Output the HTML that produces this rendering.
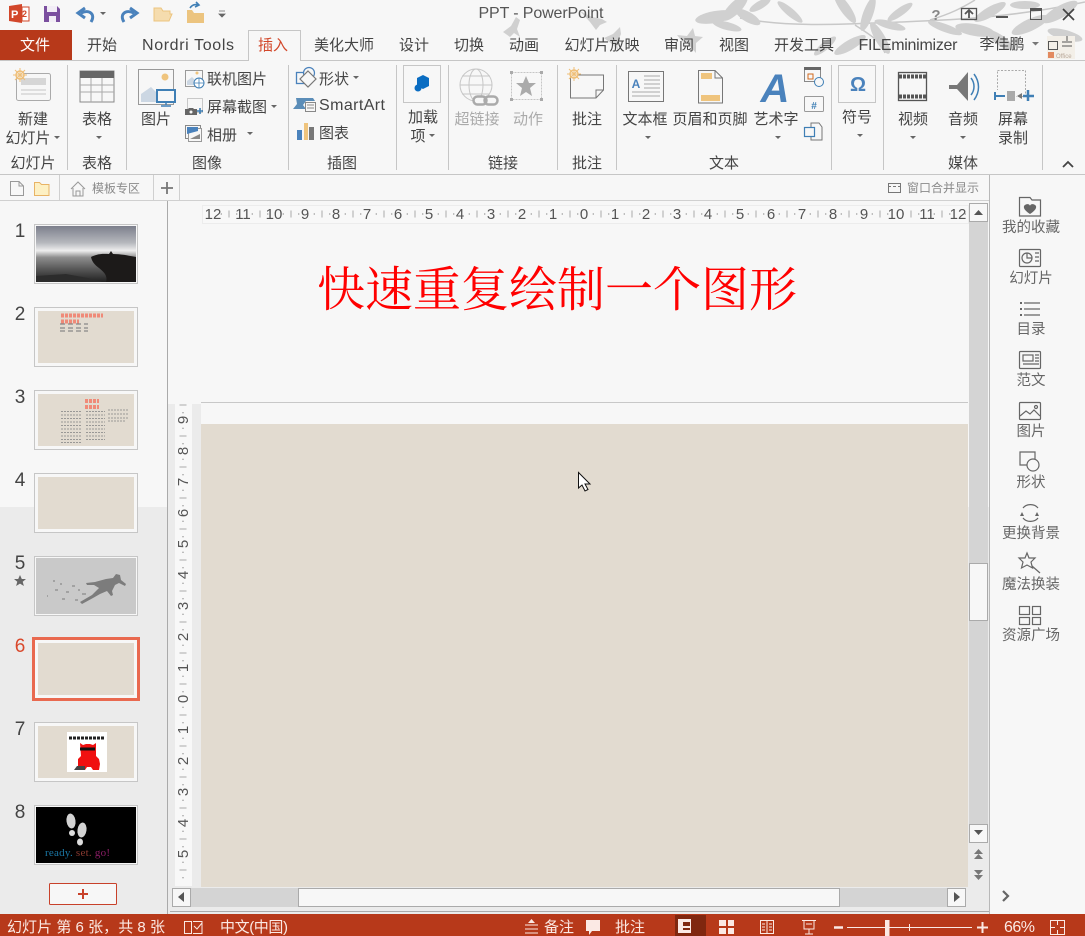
<!DOCTYPE html>
<html lang="zh"><head><meta charset="utf-8"><title>PPT - PowerPoint</title>
<style>
html,body{margin:0;padding:0;width:1085px;height:936px;overflow:hidden;background:#f7f7f7}
svg{display:block;font-family:"Liberation Sans","Noto Sans CJK SC",sans-serif}
.r text{font-size:15px;fill:#444;text-anchor:middle}
.s text{font-size:14.5px;fill:#666;text-anchor:middle}
.n text{font-size:19px;fill:#444;text-anchor:middle}
.rh text{font-size:15px;fill:#555;text-anchor:middle}
.st text{font-size:15px;fill:#fbe9e4}
.ic{fill:none;stroke:#666;stroke-width:1.2}
</style></head><body>
<svg width="1085" height="936" viewBox="0 0 1085 936" xmlns="http://www.w3.org/2000/svg">
<rect width="1085" height="936" fill="#f7f7f7"/>
<!-- decorative leaves -->
<g fill="#d0d0d0">
<path d="M503 32l8-6 5-9 4 3-3 9 3 8-6-4-4 4z"/>
<path d="M580 11l12 6 10 2 5 3-7 3-4 5-6-8z"/>
<path d="M604 38l9-4 7-7 1 7-4 9 1 7-6-6z"/>
<path d="M677 35l10 1 6-8 2 8 8 1-7 6 0 10-8-9-6-3z"/>
<g fill="none" stroke="#c8c8c8" stroke-width="1.5"><path d="M740 18C790 28 850 24 900 22S1010 18 1085 2"/><path d="M855 25c15 10 25 15 30 28M930 20c20-6 32-12 45-20"/></g>
<ellipse cx="715" cy="17" rx="20" ry="6" transform="rotate(-10 715 17)"/>
<ellipse cx="735" cy="8" rx="17" ry="6" transform="rotate(-45 735 8)"/>
<ellipse cx="748" cy="17" rx="14" ry="5" transform="rotate(30 748 17)"/>
<ellipse cx="727" cy="26" rx="15" ry="4" transform="rotate(15 727 26)"/>
<ellipse cx="760" cy="5" rx="12" ry="4" transform="rotate(-30 760 5)"/>
<ellipse cx="790" cy="12" rx="16" ry="4" transform="rotate(40 790 12)"/>
<ellipse cx="845" cy="8" rx="18" ry="5" transform="rotate(55 845 8)"/>
<ellipse cx="868" cy="14" rx="18" ry="5" transform="rotate(-70 868 14)"/>
<ellipse cx="900" cy="12" rx="15" ry="4" transform="rotate(-35 900 12)"/>
<ellipse cx="880" cy="38" rx="18" ry="5" transform="rotate(60 880 38)"/>
<ellipse cx="850" cy="45" rx="18" ry="5" transform="rotate(-30 850 45)"/>
<ellipse cx="890" cy="25" rx="16" ry="4" transform="rotate(15 890 25)"/>
<ellipse cx="945" cy="28" rx="18" ry="4" transform="rotate(20 945 28)"/>
<ellipse cx="975" cy="30" rx="20" ry="6" transform="rotate(10 975 30)"/>
<ellipse cx="990" cy="12" rx="18" ry="5" transform="rotate(-30 990 12)"/>
<ellipse cx="1000" cy="40" rx="16" ry="5" transform="rotate(35 1000 40)"/>
<ellipse cx="1030" cy="25" rx="20" ry="6" transform="rotate(-25 1030 25)"/>
<ellipse cx="1060" cy="12" rx="20" ry="6" transform="rotate(-30 1060 12)"/>
<ellipse cx="1065" cy="35" rx="18" ry="5" transform="rotate(15 1065 35)"/>
<ellipse cx="1025" cy="5" rx="15" ry="4"/>
<ellipse cx="825" cy="46" rx="14" ry="4" transform="rotate(-40 825 46)"/>
</g>
<!-- QAT -->
<path d="M9 6l13-2v19l-13-2z" fill="#d2472a"/><rect x="22" y="7" width="7" height="14" fill="#fff" stroke="#d2472a"/>
<text x="11" y="18" font-size="11" font-weight="bold" fill="#fff">P</text>
<text x="22" y="17" font-size="9" font-weight="bold" fill="#d2472a">2</text>
<path d="M44 6h13l3 3v13H44z" fill="#7b4f9f"/><rect x="47" y="6" width="10" height="6" fill="#f2edf6"/><rect x="49" y="16" width="7" height="6" fill="#f2edf6"/>
<path d="M91 22c5-8-2-13-10-9M85 8l-7 5 7 5" fill="none" stroke="#4a82bc" stroke-width="3"/>
<path d="M100 12h6l-3 3z" fill="#666"/>
<path d="M124 22c-5-8 2-13 10-9M130 8l7 5-7 5" fill="none" stroke="#4a82bc" stroke-width="3"/>
<path d="M154 21V8h7l2 3h7v3h2l-3 7z" fill="#f5dcae" stroke="#ecc47f"/>
<path d="M187 10h5l2 3h10v10h-17z" fill="#ecc47f"/><path d="M190 8c2-3 5-4 8-3M196 2l3 3-4 2" fill="none" stroke="#3f7fb5" stroke-width="1.6"/>
<path d="M219 11h6M219 14h6l-3 3z" fill="#666" stroke="#666" stroke-width=".8"/>
<text x="541" y="18" font-size="16" fill="#555" text-anchor="middle" textLength="125">PPT - PowerPoint</text>
<!-- window controls -->
<text x="936" y="20" font-size="15" font-weight="bold" fill="#888" text-anchor="middle">?</text>
<g fill="none" stroke="#555" stroke-width="1.3"><rect x="961.5" y="8.5" width="15" height="11"/><path d="M969 18v-7M965 14l4-4 4 4" stroke-width="1.8"/></g>
<rect x="996" y="16" width="12" height="2" fill="#555"/>
<rect x="1030.5" y="8.5" width="11" height="11" fill="none" stroke="#555"/><rect x="1030" y="8" width="12" height="3" fill="#555"/>
<path d="M1063 9l11 11M1074 9l-11 11" stroke="#444" stroke-width="1.7"/>
<!-- tabs -->
<rect x="0" y="30" width="72" height="31" fill="#b7391a"/>
<path d="M0 60.5H248.5V30.5H300.5V60.5H1085" fill="#f7f7f7" stroke="#c6c6c6"/>
<g class="r">
<text x="35" y="50" style="fill:#fff">文件</text>
<text x="102" y="50">开始</text>
<text x="188" y="50" style="font-size:16px" textLength="92">Nordri Tools</text>
<text x="273" y="50" style="fill:#d2472a">插入</text>
<text x="344" y="50">美化大师</text>
<text x="414" y="50">设计</text>
<text x="469" y="50">切换</text>
<text x="524" y="50">动画</text>
<text x="602" y="50">幻灯片放映</text>
<text x="679" y="50">审阅</text>
<text x="734" y="50">视图</text>
<text x="804" y="50">开发工具</text>
<text x="908" y="50" style="font-size:16px" textLength="99">FILEminimizer</text>
<text x="1002" y="49">李佳鹏</text>
</g>
<path d="M1032 42h7l-3.5 3.5z" fill="#777"/>
<!-- office logo -->
<rect x="1047" y="36" width="28" height="23" fill="#f3efe8"/>
<g fill="none" stroke="#555"><rect x="1048.500" y="41.500" width="9" height="8"/><path d="M1062 42h10M1062 46h10M1067 36v5"/></g>
<rect x="1048" y="52" width="6" height="6" fill="#e2895f"/>
<text x="1056" y="58" font-size="6" fill="#b9a89a">Office</text>
<!-- ribbon separators -->
<path d="M67.500 65V170M126.500 65V170M288.500 65V170M396.500 65V170M448.500 65V170M557.500 65V170M616.500 65V170M831.500 65V170M883.500 65V170M1042.500 65V170" stroke="#c6c6c6"/>
<path d="M0 174.500H1085" stroke="#c6c6c6"/>
<!-- ribbon labels -->
<g class="r">
<text x="33" y="124">新建</text><text x="28" y="143">幻灯片</text><text x="33" y="168">幻灯片</text>
<text x="97" y="124">表格</text><text x="97" y="168">表格</text>
<text x="156" y="124">图片</text>
<text x="237" y="84">联机图片</text><text x="237" y="112">屏幕截图</text><text x="222" y="140">相册</text><text x="207" y="168">图像</text>
<text x="334" y="84">形状</text><text x="352" y="110" style="font-size:16px" textLength="66">SmartArt</text><text x="334" y="138">图表</text><text x="342" y="168">插图</text>
<text x="423" y="122">加载</text><text x="418" y="141">项</text>
<text x="477" y="124" style="fill:#aaa">超链接</text><text x="528" y="124" style="fill:#aaa">动作</text><text x="503" y="168">链接</text>
<text x="587" y="124">批注</text><text x="587" y="168">批注</text>
<text x="645" y="124">文本框</text><text x="710" y="124">页眉和页脚</text><text x="776" y="124">艺术字</text><text x="724" y="168">文本</text>
<text x="857" y="122">符号</text>
<text x="913" y="124">视频</text><text x="963" y="124">音频</text><text x="1013" y="124">屏幕</text><text x="1013" y="143">录制</text><text x="963" y="168">媒体</text>
</g>
<!-- carets -->
<g fill="#666">
<path d="M54 136h6l-3 3z"/><path d="M96 136h6l-3 3z"/><path d="M271 105h6l-3 3z"/><path d="M247 132h6l-3 3z"/><path d="M353 76h6l-3 3z"/>
<path d="M429 134h6l-3 3z"/><path d="M645 136h6l-3 3z"/><path d="M775 136h6l-3 3z"/><path d="M857 134h6l-3 3z"/><path d="M910 136h6l-3 3z"/><path d="M960 136h6l-3 3z"/>
</g>
<path d="M1063 167l5-5 5 5" fill="none" stroke="#444" stroke-width="1.8"/>
<!-- new slide icon -->
<rect x="16.500" y="73.500" width="34" height="27" rx="2" fill="#f7f7f7" stroke="#aaa"/>
<rect x="21" y="78" width="25" height="7" fill="#d6d6d6"/><path d="M21 90h25M21 94h25" stroke="#c4c4c4"/>
<circle cx="20" cy="75" r="4" fill="#f7f7f7" stroke="#efbf78" stroke-width="1.5"/><path d="M20 68v14M13 75h14M15 70l10 10M25 70l-10 10" stroke="#efbf78"/>
<!-- table icon -->
<rect x="80" y="71" width="34" height="31" fill="#f7f7f7" stroke="#888"/><rect x="80" y="71" width="34" height="7" fill="#666"/>
<path d="M80 85h34M80 92h34M91 78v24M102 78v24" stroke="#aaa"/>
<!-- picture icon -->
<rect x="138.500" y="69.500" width="35" height="35" fill="#f7f7f7" stroke="#999"/>
<circle cx="165" cy="77" r="3.500" fill="#efc47d"/><path d="M141 102V94l10-7 8 8v7z" fill="#ccd7e3"/>
<rect x="157" y="90" width="18" height="12" fill="#f7f7f7" stroke="#3f7fb5" stroke-width="2"/><path d="M166 102v3M161 106h10" stroke="#3f7fb5" stroke-width="1.5"/>
<!-- online -->
<rect x="185.500" y="70.500" width="17" height="16" fill="#f7f7f7" stroke="#999"/><circle cx="197" cy="73" r="1.500" fill="#efc47d"/><path d="M187 85v-4l5-4 4 4v4z" fill="#ccd7e3"/>
<circle cx="199" cy="83" r="5" fill="#fff" stroke="#3f7fb5"/><path d="M194 83h10M199 78v10" stroke="#3f7fb5" stroke-width=".8"/>
<!-- screenshot -->
<rect x="187.500" y="98.500" width="15" height="14" fill="none" stroke="#999" stroke-dasharray="1 1"/>
<path d="M185 109h3l1-1h4l1 1h3v6h-12z" fill="#666"/><circle cx="191" cy="112" r="1.500" fill="#f7f7f7"/><path d="M200 108v6M197 111h6" stroke="#3f7fb5" stroke-width="1.600"/>
<!-- album -->
<rect x="185.500" y="125.500" width="15" height="13" fill="#f7f7f7" stroke="#888"/><rect x="188.500" y="128.500" width="13" height="13" fill="#f7f7f7" stroke="#999"/><path d="M187 127h11v4l-11 3z" fill="#4a82bc"/><path d="M190 139l10-5v5z" fill="#888"/>
<!-- shapes -->
<rect x="296.500" y="72.500" width="11" height="11" fill="none" stroke="#4a82bc" stroke-width="1.300"/><circle cx="309" cy="73" r="5.500" fill="#f7f7f7" stroke="#4a82bc" stroke-width="1.200"/>
<path d="M308 71l8 8-8 8-8-8z" fill="#f7f7f7" stroke="#777" stroke-width="1.200"/>
<!-- smartart -->
<path d="M296 98h17l2 3h-9l-3 4 3 4h-13l4-5z" fill="#5b8db8"/><rect x="305.500" y="102.500" width="10" height="9" fill="#f7f7f7" stroke="#888"/><path d="M307 105h7M307 108h7" stroke="#888"/>
<!-- chart -->
<rect x="297" y="130" width="5" height="10" fill="#4a82bc"/><rect x="304" y="123" width="4" height="17" fill="#efc47d"/><rect x="309" y="127" width="5" height="13" fill="#777"/>
<!-- addin -->
<rect x="403.500" y="65.500" width="37" height="37" fill="#f7f7f7" stroke="#c6c6c6"/>
<path d="M423 75l6 3v8l-6 3-6-3v-8z" fill="#0a6dc2"/><circle cx="418" cy="88" r="3.500" fill="#0a6dc2"/>
<!-- hyperlink -->
<g fill="none" stroke="#c6c6c6"><circle cx="476" cy="85" r="16"/><ellipse cx="476" cy="85" rx="7" ry="16"/><path d="M460 85h32M462 76h28M462 94h28"/></g>
<rect x="473.500" y="96.500" width="13" height="8" rx="4" fill="#f7f7f7" stroke="#aaa" stroke-width="2.500"/><rect x="484.500" y="96.500" width="13" height="8" rx="4" fill="none" stroke="#aaa" stroke-width="2.500"/>
<!-- action -->
<rect x="511.500" y="72.500" width="30" height="27" fill="none" stroke="#c6c6c6" stroke-dasharray="2 1"/>
<path d="M526 76l3 7h7l-6 5 2 8-6-4-6 4 2-8-6-5h7z" fill="#aaa"/>
<g fill="#aaa"><rect x="510" y="71" width="3" height="3"/><rect x="540" y="71" width="3" height="3"/><rect x="510" y="98" width="3" height="3"/><rect x="540" y="98" width="3" height="3"/></g>
<!-- comment -->
<path d="M570.500 75H603.500V90L596 98H570.500z" fill="#f7f7f7" stroke="#777"/><path d="M596 98v-8h7.500" fill="none" stroke="#777"/>
<circle cx="574" cy="74" r="4" fill="#f7f7f7" stroke="#efbf78" stroke-width="1.500"/><path d="M574 67v14M567 74h14M569 69l10 10M579 69l-10 10" stroke="#efbf78"/>
<!-- textbox -->
<rect x="628.500" y="71.500" width="35" height="30" fill="#f7f7f7" stroke="#777"/>
<text x="636" y="88" font-size="12" font-weight="bold" fill="#4a82bc" text-anchor="middle">A</text>
<path d="M644 76h16M644 80h16M644 84h16M644 88h16M632 92h28M632 96h28" stroke="#aaa"/>
<!-- header footer -->
<path d="M698.500 70.500H715L722.500 78V103H698.500z" fill="#f7f7f7" stroke="#777"/><path d="M715 70v8h7" fill="none" stroke="#777"/>
<rect x="701" y="73" width="11" height="6" fill="#efc47d"/><rect x="701" y="95" width="19" height="6" fill="#efc47d"/>
<!-- wordart -->
<text x="775" y="102" font-size="40" font-weight="bold" font-style="italic" fill="#4a82bc" text-anchor="middle">A</text>
<!-- date, number, object -->
<rect x="804.500" y="67.500" width="16" height="14" fill="#f7f7f7" stroke="#888"/><rect x="804" y="67" width="17" height="3" fill="#666"/><rect x="808" y="74" width="5" height="5" fill="#f7f7f7" stroke="#d2691e"/><circle cx="819" cy="82" r="4.500" fill="#f7f7f7" stroke="#3f7fb5"/>
<rect x="804.500" y="96.500" width="19" height="15" rx="1" fill="#f7f7f7" stroke="#999"/><text x="814" y="109" font-size="10" font-weight="bold" fill="#3f7fb5" text-anchor="middle">#</text>
<path d="M811 123h8l3 4v13h-11z" fill="#f7f7f7" stroke="#777"/><rect x="804.500" y="127.500" width="10" height="9" fill="#f7f7f7" stroke="#3f7fb5" stroke-width="1.200"/>
<!-- symbol -->
<rect x="838.500" y="65.500" width="37" height="37" fill="#f7f7f7" stroke="#c6c6c6"/>
<text x="858" y="91" font-size="20" font-weight="bold" fill="#4a82bc" text-anchor="middle">Ω</text>
<!-- video -->
<rect x="898.500" y="72.500" width="28" height="28" fill="#f7f7f7" stroke="#555" stroke-width="1.300"/>
<path d="M899 76.500h27M899 96.500h27" stroke="#555" stroke-width="4" stroke-dasharray="3 1"/>
<!-- audio -->
<path d="M949 85h8l11-13v29l-11-12h-8z" fill="#777"/><path d="M971 78c4 5 4 12 0 17M974 74c6 8 6 18 0 26" fill="none" stroke="#3f7fb5" stroke-width="1.500"/>
<!-- screen record -->
<rect x="997.500" y="70.500" width="28" height="26" fill="none" stroke="#aaa" stroke-dasharray="2 1.500"/>
<rect x="995" y="90" width="21" height="12" fill="#f7f7f7"/><path d="M995 92v8M996 96h9" stroke="#3f7fb5" stroke-width="2"/><rect x="1007" y="91" width="8" height="10" fill="#aaa"/><path d="M1017 96l5-3v6z" fill="#777"/><path d="M1028 90v11M1023 96h11" stroke="#3f7fb5" stroke-width="2.500"/>
<!-- toolbar -->
<path d="M59.500 175V200M153.500 175V200M179.500 175V200" stroke="#d0d0d0"/>
<path d="M10.500 181.500H19L23.500 186V195.500H10.500z" fill="none" stroke="#999"/><path d="M19 181v5h4.500" fill="none" stroke="#999"/>
<path d="M34.500 182.500h5l2 2h7.500v11h-14.500z" fill="#fdf0c3" stroke="#e8b365"/>
<path d="M71 189l7-7 7 7M73 188v8h10v-8M76 196v-5h4v5" fill="none" stroke="#999"/>
<text x="116" y="192.500" font-size="12" fill="#8a8a8a" text-anchor="middle">模板专区</text>
<path d="M167 182v12M161 188h12" stroke="#777" stroke-width="1.800"/>
<rect x="888.500" y="183.500" width="12" height="9" fill="none" stroke="#777"/><path d="M888 186.500h13" stroke="#777"/><path d="M891 186.500h2M896 186.500h2" stroke="#f7f7f7"/>
<text x="943" y="192" font-size="12" fill="#8a8a8a" text-anchor="middle">窗口合并显示</text>
<path d="M0 200.500H990" stroke="#d0d0d0"/>
<path d="M989.500 175V914" stroke="#b8b8b8"/>
<!-- lower tone panes -->
<rect x="0" y="507" width="167" height="407" fill="#ebebeb"/>
<rect x="168" y="404" width="33" height="510" fill="#ebebeb"/>
<rect x="201" y="887" width="788" height="27" fill="#ebebeb"/>
<rect x="968" y="507" width="21" height="407" fill="#ebebeb"/>
<path d="M167.500 201V914" stroke="#aaa"/>
<!-- horizontal ruler -->
<rect x="202.500" y="205.500" width="766" height="18" fill="#f8f8f8" stroke="#ececec"/>
<path d="M220.750 214H968" stroke="#aaa" stroke-width="2" stroke-dasharray="1 14.500"/>
<path d="M228.500 214H968" stroke="#aaa" stroke-width="7" stroke-dasharray="1 30"/>
<g class="rh">
<text x="213" y="219">12</text><text x="243" y="219">11</text><text x="274" y="219">10</text><text x="305" y="219">9</text><text x="336" y="219">8</text><text x="367" y="219">7</text><text x="398" y="219">6</text><text x="429" y="219">5</text><text x="460" y="219">4</text><text x="491" y="219">3</text><text x="522" y="219">2</text><text x="553" y="219">1</text><text x="584" y="219">0</text><text x="615" y="219">1</text><text x="646" y="219">2</text><text x="677" y="219">3</text><text x="708" y="219">4</text><text x="740" y="219">5</text><text x="771" y="219">6</text><text x="802" y="219">7</text><text x="833" y="219">8</text><text x="864" y="219">9</text><text x="896" y="219">10</text><text x="927" y="219">11</text><text x="958" y="219">12</text>
</g>
<!-- title -->
<text x="557" y="306" font-size="48" fill="#ff0000" text-anchor="middle" style="font-family:'Noto Serif CJK SC',serif">快速重复绘制一个图形</text>
<path d="M201 402.500H968" stroke="#c8c8c8"/>
<!-- vertical ruler -->
<rect x="175" y="404" width="17" height="482" fill="#f8f8f8"/>
<path d="M183 412.250V884" stroke="#aaa" stroke-width="2" stroke-dasharray="1 14.500"/>
<path d="M183 404.500V884" stroke="#aaa" stroke-width="7" stroke-dasharray="1 30"/>
<g class="rh">
<text x="183" y="425" transform="rotate(-90 183 420)">9</text><text x="183" y="456" transform="rotate(-90 183 451)">8</text><text x="183" y="487" transform="rotate(-90 183 482)">7</text><text x="183" y="518" transform="rotate(-90 183 513)">6</text><text x="183" y="549" transform="rotate(-90 183 544)">5</text><text x="183" y="580" transform="rotate(-90 183 575)">4</text><text x="183" y="611" transform="rotate(-90 183 606)">3</text><text x="183" y="642" transform="rotate(-90 183 637)">2</text><text x="183" y="673" transform="rotate(-90 183 668)">1</text><text x="183" y="704" transform="rotate(-90 183 699)">0</text><text x="183" y="735" transform="rotate(-90 183 730)">1</text><text x="183" y="766" transform="rotate(-90 183 761)">2</text><text x="183" y="797" transform="rotate(-90 183 792)">3</text><text x="183" y="828" transform="rotate(-90 183 823)">4</text><text x="183" y="859" transform="rotate(-90 183 854)">5</text>
</g>
<!-- slide -->
<rect x="201" y="424" width="767" height="463" fill="#e2dbd0"/>
<path d="M578.500 472.500V488L582 485L585 491L588 489.500L585 484H590z" fill="#fff" stroke="#111"/>
<!-- scrollbars -->
<rect x="969" y="203" width="19" height="640" fill="#d4d4d4"/>
<rect x="969.500" y="203.500" width="18" height="18" fill="#f7f7f7" stroke="#aaa"/><path d="M974 215l4.500-5 4.500 5z" fill="#555"/>
<rect x="969.500" y="563.500" width="18" height="57" fill="#f7f7f7" stroke="#aaa"/>
<rect x="969.500" y="824.500" width="18" height="18" fill="#f7f7f7" stroke="#aaa"/><path d="M974 830h9l-4.500 5z" fill="#555"/>
<path d="M974 854l4.500-5 4.500 5zM974 859l4.500-5 4.500 5zM974 870h9l-4.500 5zM974 875h9l-4.500 5z" fill="#777"/>
<rect x="172" y="888" width="794" height="19" fill="#d4d4d4"/>
<rect x="172.500" y="888.500" width="18" height="18" fill="#f7f7f7" stroke="#aaa"/><path d="M184 892v10l-6-5z" fill="#555"/>
<rect x="298.500" y="888.500" width="541" height="18" fill="#f7f7f7" stroke="#aaa"/>
<rect x="947.500" y="888.500" width="18" height="18" fill="#f7f7f7" stroke="#aaa"/><path d="M954 892v10l6-5z" fill="#555"/>
<path d="M170 911.500H989" stroke="#aaa"/>
<!-- slide numbers -->
<g class="n"><text x="20" y="237">1</text><text x="20" y="320">2</text><text x="20" y="403">3</text><text x="20" y="486">4</text><text x="20" y="569">5</text><text x="20" y="652" style="fill:#d9482b">6</text><text x="20" y="735">7</text><text x="20" y="818">8</text></g>
<path d="M20 575l1.800 4h4.200l-3.300 2.800 1.200 4.200-3.900-2.400-3.900 2.400 1.200-4.200-3.300-2.800h4.200z" fill="#666"/>
<defs>
<linearGradient id="sky" x1="0" y1="0" x2="0" y2="1"><stop offset="0" stop-color="#7c7f8c"/><stop offset=".3" stop-color="#b6b8bd"/><stop offset=".44" stop-color="#eeeeee"/><stop offset=".56" stop-color="#8e8e8e"/><stop offset=".78" stop-color="#555"/><stop offset="1" stop-color="#222"/></linearGradient>
</defs>
<!-- thumb 1 -->
<rect x="34.500" y="224.500" width="103" height="59" fill="#f7f7f7" stroke="#c6c6c6"/>
<rect x="36" y="226" width="100" height="56" fill="url(#sky)"/>
<path d="M91 257c8-4 14-3 18-3l2-3 2 3c8 0 18 2 23 3v25H106c2-6-2-10-7-14-4-3-7-6-8-11z" fill="#1c1a19"/>
<path d="M36 276l30-2 22 4 14 4H36z" fill="#2c2c2c"/>
<!-- thumb 2 -->
<rect x="34.500" y="307.500" width="103" height="59" fill="#f7f7f7" stroke="#c6c6c6"/><rect x="38" y="311" width="96" height="52" fill="#e2dbd0"/>
<path d="M61 315.500h42M61 321.500h18" stroke="#f08a78" stroke-width="4" stroke-dasharray="3 1"/>
<path d="M60 324h28M60 328h28M60 331h28" stroke="#888" stroke-width="1.200" stroke-dasharray="5 3"/>
<!-- thumb 3 -->
<rect x="34.500" y="390.500" width="103" height="59" fill="#f7f7f7" stroke="#c6c6c6"/><rect x="38" y="394" width="96" height="52" fill="#e2dbd0"/>
<path d="M85 401h14M85 407h14" stroke="#f08a78" stroke-width="4" stroke-dasharray="3 1"/>
<path d="M61 411.500h21M61 415h21M61 418.500h21M61 422h21M61 425.500h21M61 429h21M61 432.500h21M61 436h21M61 439.500h21M61 442.500h21M86 411.500h19M86 415h19M86 418.500h19M86 422h19M86 425.500h19M86 429h19M86 432.500h19M86 436h19M86 439.500h19M108 410h20M108 414h20M108 418h20M108 421h18" stroke="#888" stroke-dasharray="2 1" opacity=".8"/>
<!-- thumb 4 -->
<rect x="34.500" y="473.500" width="103" height="59" fill="#f7f7f7" stroke="#c6c6c6"/><rect x="38" y="477" width="96" height="52" fill="#e2dbd0"/>
<!-- thumb 5 -->
<rect x="34.500" y="556.500" width="103" height="59" fill="#f7f7f7" stroke="#c6c6c6"/><rect x="36" y="558" width="100" height="56" fill="#c9c9c9"/>
<path d="M80 602l12-7 7-7-5-3-7 0-1-2 9-1 11-3 7-1 3-4 4 1 1 5 5 4-1 2-6-3-4 2-3 6 1 4-2 1-4-5-7 3-7 4-11 6z" fill="#7c7c7c"/>
<path d="M47 596h1M55 590h3M60 584h2M66 592h3M72 586h3M62 599h3M78 590h2M82 594h4M75 600h3M53 581h2" stroke="#8a8a8a" stroke-width="1.300"/>
<!-- thumb 6 selected -->
<rect x="33.500" y="638.500" width="105" height="61" fill="#f7f7f7" stroke="#e9694f" stroke-width="3"/><rect x="38" y="643" width="96" height="52" fill="#e2dbd0"/>
<!-- thumb 7 -->
<rect x="34.500" y="722.500" width="103" height="59" fill="#f7f7f7" stroke="#c6c6c6"/><rect x="38" y="726" width="96" height="52" fill="#e2dbd0"/>
<rect x="67" y="732" width="40" height="40" fill="#fff"/>
<path d="M69 738h36" stroke="#222" stroke-width="3" stroke-dasharray="3 1"/>
<path d="M78 768v-9l3-3-1-13 3 2 3-1 4 0 3 1 3-2v13l3 3 1 5-1 6H93l-2-3-4 0-2 3h-4z" fill="#f01010"/>
<path d="M80 749h15" stroke="#111" stroke-width="3"/><path d="M74 770l3-4h8v4z" fill="#444"/>
<!-- thumb 8 -->
<rect x="34.500" y="805.500" width="103" height="59" fill="#f7f7f7" stroke="#c6c6c6"/><rect x="36" y="807" width="100" height="56" fill="#000"/>
<ellipse cx="71" cy="821" rx="4.500" ry="7.500" fill="#d3d3d3" transform="rotate(-8 71 821)"/><ellipse cx="72" cy="833" rx="3" ry="3" fill="#ddd"/>
<ellipse cx="82" cy="830" rx="4.500" ry="7.500" fill="#d3d3d3" transform="rotate(8 82 830)"/><ellipse cx="80" cy="842" rx="3" ry="3.500" fill="#ddd"/>
<text x="45" y="856" font-size="11" style="font-family:'Liberation Serif',serif" fill="#1b79a8" textLength="65">ready. <tspan fill="#8a3a30">set.</tspan> <tspan fill="#8c1d66">go!</tspan></text>
<!-- new slide button -->
<rect x="49.500" y="883.500" width="67" height="21" rx="1" fill="#f7f7f7" stroke="#c8412a"/>
<path d="M83 889v10M78 894h10" stroke="#c8412a" stroke-width="2"/>
<!-- right panel -->
<g class="ic">
<path d="M1019.500 216V197.500H1030l2 2.500h8.500v16z"/>
<rect x="1019.500" y="249.500" width="21" height="17" rx="1"/><circle cx="1027" cy="258" r="5"/><path d="M1027 253v5h5M1035 253h4M1035 257h4M1035 261h4"/>
<path d="M1024 303h16M1024 309h16M1024 315h16"/><path d="M1020 303h2M1020 309h2M1020 315h2" stroke-width="2"/>
<rect x="1019.500" y="351.500" width="21" height="17" rx="1"/><rect x="1023" y="355" width="10" height="6"/><path d="M1035 355h4M1035 358h4M1035 361h4M1023 364h16"/>
<rect x="1019.500" y="402.500" width="21" height="17" rx="1"/><path d="M1020 416l6-5 4 3 4-4 6 6"/><circle cx="1036" cy="407" r="1.500"/>
<path d="M1027 465h-7v-13h15v7"/><circle cx="1033" cy="465" r="6"/>
<path d="M1023 508c3-4 11-5 15 0M1038 518c-3 4-11 5-15 0"/>
<path d="M1027 553l2 5 6 0-4 4 1.500 6-5.500-3-5.500 3 1.500-6-4-4 6 0z"/><path d="M1032 566l8 7"/>
<rect x="1019.500" y="606.500" width="10" height="8"/><rect x="1032.500" y="606.500" width="8" height="8"/><rect x="1019.500" y="617.500" width="10" height="7"/><rect x="1032.500" y="617.500" width="8" height="7"/>
</g>
<path d="M1024 206c2-3 6-2 6 0 0-2 4-3 6 0 1 3-3 6-6 8-3-2-7-5-6-8z" fill="#666"/>
<path d="M1037 512l2 4-4 0zM1022 512l2 4-4 0z" fill="#666"/>
<g class="s">
<text x="1031" y="232">我的收藏</text><text x="1031" y="283">幻灯片</text><text x="1031" y="334">目录</text><text x="1031" y="385">范文</text><text x="1031" y="436">图片</text><text x="1031" y="487">形状</text><text x="1031" y="538">更换背景</text><text x="1031" y="589">魔法换装</text><text x="1031" y="640">资源广场</text>
</g>
<path d="M1003 891l5 5-5 5" fill="none" stroke="#666" stroke-width="2.200"/>
<!-- status bar -->
<rect x="0" y="914" width="1085" height="22" fill="#b7391a"/>
<rect x="675" y="915" width="31" height="21" fill="#80270f"/>
<g class="st">
<text x="7" y="932" textLength="158">幻灯片 第 6 张，共 8 张</text>
<text x="220" y="932" textLength="68">中文(中国)</text>
<text x="544" y="932">备注</text>
<text x="615" y="932">批注</text>
<text x="1004" y="932" style="font-size:16px" textLength="31">66%</text>
</g>
<g fill="none" stroke="#fbe9e4">
<path d="M184.500 921.500h7v12h-7zM191.500 933.500v-12M193 921.500h9v12h-9M194 926l3 3 5-6" />
<path d="M525 925h13M525 929h13M525 933h13"/><path d="M528 923l3.500-4 3.500 4z" fill="#fbe9e4" stroke="none"/>
<rect x="760.500" y="920.500" width="13" height="13"/><path d="M767 920v14M762 924h3M762 927h3M762 930h3M769 924h3M769 927h3M769 930h3"/>
<path d="M802 920.500h14M804 921v8h10v-8M809 929v5M805 934h8"/><path d="M806 924h6" />
<rect x="1050.500" y="920.500" width="14" height="14"/><path d="M1057.500 921v4M1057.500 930v4M1051 927.500h4M1060 927.500h4"/>
</g>
<path d="M586 920h14v11h-8l-3 4v-4h-3z" fill="#fbe9e4"/>
<rect x="678" y="919" width="13" height="14" fill="#fbe9e4"/><rect x="683" y="922" width="7" height="4" fill="#80270f"/><rect x="683" y="928" width="7" height="2" fill="#80270f"/>
<g fill="#fbe9e4"><rect x="719" y="920" width="7" height="6"/><rect x="728" y="920" width="6" height="6"/><rect x="719" y="928" width="7" height="6"/><rect x="728" y="928" width="6" height="6"/></g>
<path d="M834 927.500h9" stroke="#fbe9e4" stroke-width="2.500"/>
<path d="M847 927.500h125" stroke="#fbe9e4"/><path d="M909.500 924v7" stroke="#fbe9e4"/>
<rect x="885" y="920" width="4.500" height="16" fill="#fbe9e4"/>
<path d="M977 927.500h11M982.500 922v11" stroke="#fbe9e4" stroke-width="2"/>
</svg>
</body></html>
